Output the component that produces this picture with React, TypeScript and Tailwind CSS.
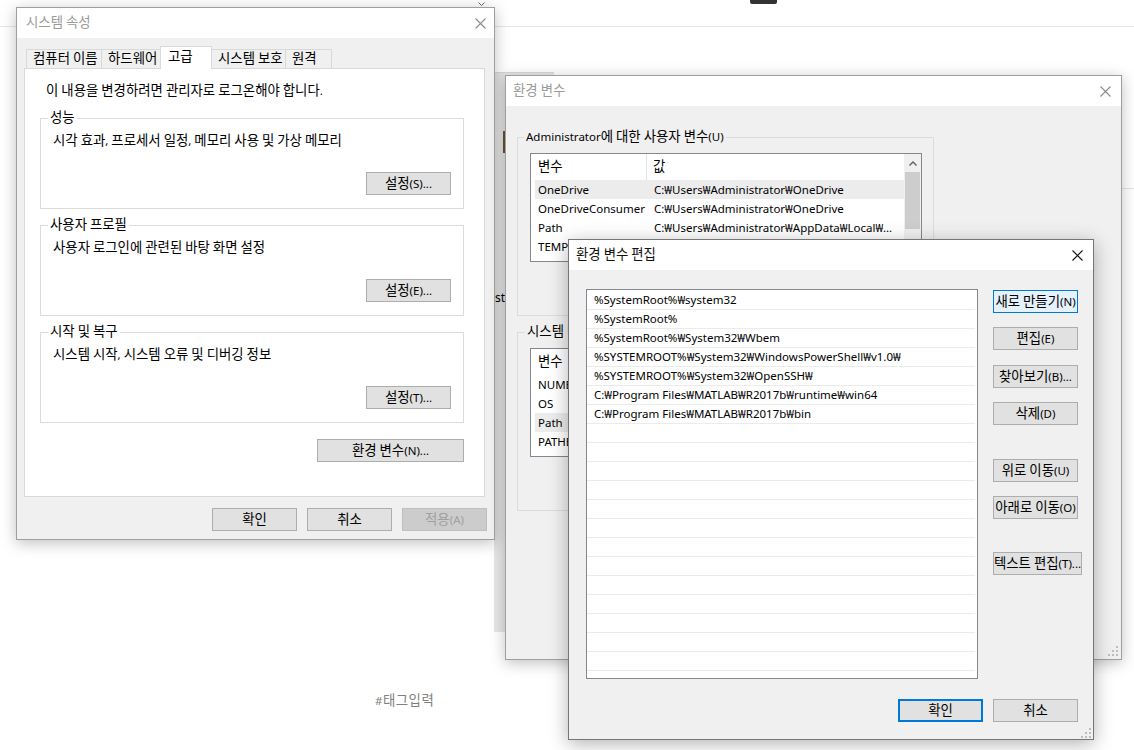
import React from "react";

const FONT = "font-['Noto_Sans','Noto_Sans_CJK_KR',sans-serif]";

const HANGUL = /([\u1100-\u11FF\u3130-\u318F\uAC00-\uD7AF]+)/;

function T({ s }: { s: string }) {
  const parts = s.split(HANGUL);
  return (
    <span>
      {parts.map((p, i) =>
        i % 2 === 1 ? (
          <span key={i} className="text-[13.4px] leading-[0] font-['Noto_Sans_CJK_KR',sans-serif]">
            {p}
          </span>
        ) : (
          <React.Fragment key={i}>{p}</React.Fragment>
        )
      )}
    </span>
  );
}

function CloseX({ dark }: { dark?: boolean }) {
  return (
    <svg width="11" height="11" viewBox="0 0 11 11" className="shrink-0">
      <path
        d="M0.5 0.5L10.5 10.5M10.5 0.5L0.5 10.5"
        stroke={dark ? "#111111" : "#8c8c8c"}
        strokeWidth="1.1"
        fill="none"
      />
    </svg>
  );
}

type BtnProps = {
  label: string;
  w?: string;
  variant?: "normal" | "disabled" | "focus" | "default";
};

function Btn({ label, w = "w-[85px]", variant = "normal" }: BtnProps) {
  const base =
    "h-[23px] flex items-center justify-center text-[11.5px] leading-[16px] whitespace-nowrap shrink-0 overflow-hidden";
  const v =
    variant === "disabled"
      ? "border border-[#bfbfbf] bg-[#cccccc] text-[#a0a0a0]"
      : variant === "focus"
      ? "border border-[#0078d7] bg-[#e5f1fb]"
      : variant === "default"
      ? "border-2 border-[#0078d7] bg-[#e1e1e1]"
      : "border border-[#adadad] bg-[#e1e1e1]";
  return (
    <div className={`${base} ${w} ${v}`}>
      <T s={label} />
    </div>
  );
}

function Grip() {
  const dots = [
    [8, 0],
    [8, 4],
    [4, 4],
    [8, 8],
    [4, 8],
    [0, 8],
  ];
  return (
    <svg width="10" height="10" viewBox="0 0 10 10">
      {dots.map(([x, y], i) => (
        <rect key={i} x={x} y={y} width="2" height="2" fill="#bdbdbd" />
      ))}
    </svg>
  );
}

function Group({
  legend,
  desc,
  btn,
  first,
}: {
  legend: string;
  desc: string;
  btn: string;
  first?: boolean;
}) {
  return (
    <fieldset
      className={`border border-[#dcdcdc] w-[424px] ${first ? "mt-[11px]" : "mt-[8px]"}`}
    >
      <legend className="ml-[7px] px-[2px] h-[16px] leading-[16px]">
        <T s={legend} />
      </legend>
      <div className="flex flex-col pl-[12px] pr-[12px] pb-[13px]">
        <div className="mt-[7px] h-[16px] leading-[16px]">
          <T s={desc} />
        </div>
        <div className="flex justify-end mt-[23px]">
          <Btn label={btn} />
        </div>
      </div>
    </fieldset>
  );
}

function Tab({ label, cls }: { label: string; cls: string }) {
  return (
    <div className={`h-[19px] border-t border-[#d9d9d9] flex items-center pl-[6px] whitespace-nowrap ${cls}`}>
      <T s={label} />
    </div>
  );
}

function SystemProps() {
  return (
    <div className="absolute left-[16px] top-[7px] w-[479px] h-[533px] border border-[#9f9f9f] bg-[#f0f0f0] shadow-[0_3px_14px_rgba(0,0,0,0.25)] flex flex-col leading-[16px]">
      <div className="h-[30px] bg-white flex items-center justify-between pl-[9px] pr-[8px] shrink-0">
        <span className="text-[#9a9a9a]">
          <T s="시스템 속성" />
        </span>
        <CloseX />
      </div>
      <div className="flex flex-col pl-[7px] pt-[8px]">
        <div className="flex items-end h-[22px] pl-[2px]">
          <Tab label="컴퓨터 이름" cls="w-[75px] border-l" />
          <Tab label="하드웨어" cls="w-[59px] border-l" />
          <div className="relative z-10 -mb-px w-[52px] h-[23px] border-l border-t border-r border-[#d9d9d9] bg-white flex items-start pt-[2px] pl-[7px]">
            <T s="고급" />
          </div>
          <Tab label="시스템 보호" cls="w-[73px]" />
          <Tab label="원격" cls="w-[47px] border-l border-r" />
        </div>
        <div className="w-[461px] h-[429px] border border-[#d9d9d9] bg-white flex flex-col pl-[15px]">
          <div className="mt-[14px] ml-[6px] h-[16px] leading-[16px]">
            <T s="이 내용을 변경하려면 관리자로 로그온해야 합니다." />
          </div>
          <Group
            first
            legend="성능"
            desc="시각 효과, 프로세서 일정, 메모리 사용 및 가상 메모리"
            btn="설정(S)..."
          />
          <Group
            legend="사용자 프로필"
            desc="사용자 로그인에 관련된 바탕 화면 설정"
            btn="설정(E)..."
          />
          <Group
            legend="시작 및 복구"
            desc="시스템 시작, 시스템 오류 및 디버깅 정보"
            btn="설정(T)..."
          />
          <div className="w-[424px] flex justify-end mt-[16px]">
            <Btn label="환경 변수(N)..." w="w-[147px]" />
          </div>
        </div>
        <div className="flex justify-end gap-[10px] pr-[7px] mt-[11px]">
          <Btn label="확인" />
          <Btn label="취소" />
          <Btn label="적용(A)" variant="disabled" />
        </div>
      </div>
    </div>
  );
}

type Row = { name: string; value: string; sel?: boolean };

function VarList({ rows, scroll }: { rows: Row[]; scroll?: boolean }) {
  return (
    <div className="w-[392px] h-[109px] border border-[#828790] bg-white flex overflow-hidden">
      <div className="flex-1 flex flex-col pl-[4px] min-w-0">
        <div className="h-[26px] flex items-center shrink-0">
          <div className="w-[112px] h-full flex items-center pl-[3px] border-r border-[#e5e5e5]">
            <T s="변수" />
          </div>
          <div className="pl-[6px]">
            <T s="값" />
          </div>
        </div>
        {rows.map((r, i) => (
          <div
            key={i}
            className={`h-[19px] flex items-center shrink-0 ${r.sel ? "bg-[#ececec]" : ""}`}
          >
            <div className="w-[116px] pl-[3px] whitespace-nowrap overflow-hidden">{r.name}</div>
            <div className="w-[246px] pl-[3px] whitespace-nowrap overflow-hidden text-ellipsis">{r.value}</div>
          </div>
        ))}
      </div>
      {scroll && (
        <div className="w-[17px] bg-[#f0f0f0] flex flex-col items-center shrink-0">
          <div className="h-[18px] flex items-center justify-center">
            <svg width="8" height="5" viewBox="0 0 8 5">
              <path d="M0.5 4.5L4 1L7.5 4.5" stroke="#606060" strokeWidth="1.4" fill="none" />
            </svg>
          </div>
          <div className="w-[15px] h-[57px] bg-[#cdcdcd]" />
        </div>
      )}
    </div>
  );
}

function EnvVars() {
  const userRows: Row[] = [
    { name: "OneDrive", value: "C:₩Users₩Administrator₩OneDrive", sel: true },
    { name: "OneDriveConsumer", value: "C:₩Users₩Administrator₩OneDrive" },
    { name: "Path", value: "C:₩Users₩Administrator₩AppData₩Local₩Microsoft₩WindowsApps;" },
    { name: "TEMP", value: "C:₩Users₩Administrator₩AppData₩Local₩Temp" },
    { name: "TMP", value: "C:₩Users₩Administrator₩AppData₩Local₩Temp" },
  ];
  const sysRows: Row[] = [
    { name: "NUMBER_OF_PROCESSORS", value: "8" },
    { name: "OS", value: "Windows_NT" },
    { name: "Path", value: "C:₩Windows₩system32;C:₩Windows;", sel: true },
    { name: "PATHEXT", value: ".COM;.EXE;.BAT;.CMD;.VBS;.VBE;.JS" },
    { name: "PROCESSOR_ARCHITECTURE", value: "AMD64" },
  ];
  return (
    <div className="absolute left-[505px] top-[75px] w-[617px] h-[585px] border border-[#9f9f9f] bg-[#f0f0f0] shadow-[0_3px_14px_rgba(0,0,0,0.25)] flex flex-col leading-[16px]">
      <div className="h-[30px] bg-white flex items-center justify-between pl-[7px] pr-[10px] shrink-0">
        <span className="text-[#9a9a9a]">
          <T s="환경 변수" />
        </span>
        <CloseX />
      </div>
      <div className="flex flex-col pl-[11px] pt-[23px]">
        <fieldset className="border border-[#dcdcdc] w-[417px]">
          <legend className="ml-[6px] px-[2px] h-[16px]">
            <T s="Administrator에 대한 사용자 변수(U)" />
          </legend>
          <div className="pl-[12px] pt-[8px] pb-[53px]">
            <VarList rows={userRows} scroll />
          </div>
        </fieldset>
        <fieldset className="border border-[#dcdcdc] w-[417px] mt-[8px]">
          <legend className="ml-[7px] px-[2px] h-[16px]">
            <T s="시스템 변수(S)" />
          </legend>
          <div className="pl-[12px] pt-[8px] pb-[53px]">
            <VarList rows={sysRows} />
          </div>
        </fieldset>
      </div>
      <div className="absolute right-[3px] bottom-[3px] flex">
        <Grip />
      </div>
    </div>
  );
}

function EditEnv() {
  const items = [
    "%SystemRoot%₩system32",
    "%SystemRoot%",
    "%SystemRoot%₩System32₩Wbem",
    "%SYSTEMROOT%₩System32₩WindowsPowerShell₩v1.0₩",
    "%SYSTEMROOT%₩System32₩OpenSSH₩",
    "C:₩Program Files₩MATLAB₩R2017b₩runtime₩win64",
    "C:₩Program Files₩MATLAB₩R2017b₩bin",
  ];
  const rows = Array.from({ length: 21 }, (_, i) => items[i] ?? "");
  return (
    <div className="absolute left-[568px] top-[239px] w-[526px] h-[501px] border border-[#767676] bg-[#f0f0f0] shadow-[0_4px_18px_rgba(0,0,0,0.3)] flex flex-col leading-[16px]">
      <div className="h-[30px] bg-white flex items-center justify-between pl-[7px] pr-[10px] shrink-0">
        <span className="text-[#111111]">
          <T s="환경 변수 편집" />
        </span>
        <CloseX dark />
      </div>
      <div className="flex flex-col pl-[17px] pt-[19px]">
        <div className="flex gap-[15px]">
          <div className="w-[392px] h-[390px] border border-[#828790] bg-white overflow-hidden pt-px">
            {rows.map((t, i) => (
              <div
                key={i}
                className="h-[19px] border-b border-[#ebebeb] mr-[2px] pl-[7px] flex items-center whitespace-nowrap"
              >
                {t}
              </div>
            ))}
          </div>
          <div className="flex flex-col">
            <div className="mt-[1px]">
              <Btn label="새로 만들기(N)" variant="focus" />
            </div>
            <div className="mt-[14px]">
              <Btn label="편집(E)" />
            </div>
            <div className="mt-[15px]">
              <Btn label="찾아보기(B)..." />
            </div>
            <div className="mt-[14px]">
              <Btn label="삭제(D)" />
            </div>
            <div className="mt-[34px]">
              <Btn label="위로 이동(U)" />
            </div>
            <div className="mt-[14px]">
              <Btn label="아래로 이동(O)" />
            </div>
            <div className="mt-[33px]">
              <Btn label="텍스트 편집(T)..." w="w-[89px]" />
            </div>
          </div>
        </div>
        <div className="flex justify-end gap-[10px] pr-[15px] mt-[20px]">
          <Btn label="확인" variant="default" />
          <Btn label="취소" />
        </div>
      </div>
      <div className="absolute right-[2px] bottom-[1px] flex">
        <Grip />
      </div>
    </div>
  );
}

export default function App() {
  return (
    <div className={`relative w-[1134px] h-[750px] overflow-hidden bg-white text-black text-[11.5px] ${FONT}`}>
      {/* background page elements */}
      <div className="absolute left-0 top-[26px] w-[1134px] h-px bg-[#e6e6e6]" />
      <div className="absolute left-[750px] top-0 w-[27px] h-[4px] bg-[#333333] rounded-b-[2px]" />
      <div className="absolute left-[478px] top-[2px] flex">
        <svg width="7" height="4" viewBox="0 0 7 4">
          <path d="M0.5 0.5L3.5 3.5L6.5 0.5" stroke="#666666" strokeWidth="1" fill="none" />
        </svg>
      </div>
      <div className="absolute left-[1100px] top-[188px] w-[34px] h-px bg-[#e3e3e3]" />
      <div className="absolute left-[494px] top-[72px] w-[60px] h-[560px] bg-[#e6e6e6] border-t border-[#d8d8d8] overflow-hidden leading-[16px]">
        <div className="absolute left-[9px] top-[58px] w-[2px] h-[22px] bg-[#6b5230]" />
        <div className="absolute right-[49px] top-[217px] whitespace-nowrap text-[12px]">Administ</div>
      </div>
      <div className="absolute left-[375px] top-[693px] leading-[16px] tracking-[0.5px] text-[#808080]">
        <T s="#태그입력" />
      </div>

      <SystemProps />
      <EnvVars />
      <EditEnv />
    </div>
  );
}
